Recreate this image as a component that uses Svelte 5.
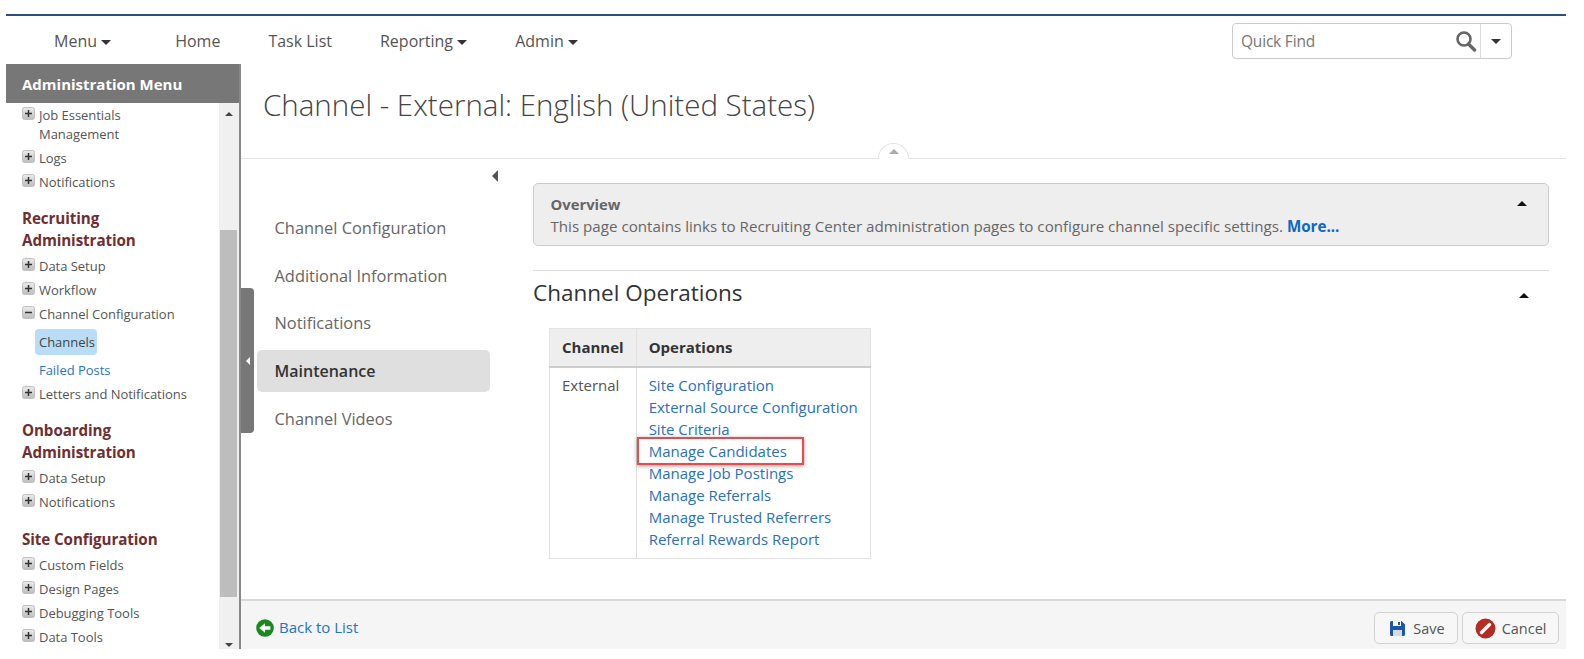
<script>
  const ops = ['Site Configuration', 'External Source Configuration', 'Site Criteria', 'Manage Candidates', 'Manage Job Postings', 'Manage Referrals', 'Manage Trusted Referrers', 'Referral Rewards Report'];
  const sideNav = ['Channel Configuration', 'Additional Information', 'Notifications', 'Maintenance', 'Channel Videos'];
</script>

{#snippet box(minus = false)}
  <svg class="box" width="13" height="13" viewBox="0 0 13 13">
    <defs><linearGradient id="g" x1="0" y1="0" x2="0" y2="1"><stop offset="0" stop-color="#ececec"/><stop offset="1" stop-color="#bcbcbc"/></linearGradient></defs>
    <rect x="0.5" y="0.5" width="12" height="12" rx="2" fill="url(#g)" stroke="#c0c0c0"/>
    <rect x="3" y="5.75" width="7" height="1.500" fill="#333"/>
    {#if !minus}<rect x="5.75" y="3" width="1.500" height="7" fill="#333"/>{/if}
  </svg>
{/snippet}

{#snippet item(label, minus = false)}
  <div class="row">{@render box(minus)}<span>{label}</span></div>
{/snippet}

{#snippet caret()}
  <i class="caret"></i>
{/snippet}

<div class="page">
  <nav class="nav">
    <a class="first">Menu {@render caret()}</a>
    <a>Home</a>
    <a>Task List</a>
    <a>Reporting {@render caret()}</a>
    <a>Admin {@render caret()}</a>
    <div class="find">
      <span class="ph">Quick Find</span>
      <svg class="glass" width="22" height="22" viewBox="0 0 22 22">
        <circle cx="9" cy="9" r="6.5" fill="none" stroke="#666" stroke-width="2.6"/>
        <path d="M13.5 14l6 6" stroke="#666" stroke-width="3.4" stroke-linecap="round"/>
      </svg>
      <span class="findbtn"><i class="caret dark"></i></span>
    </div>
  </nav>

  <div class="main">
    <aside class="side">
      <div class="sidehead">Administration Menu</div>
      <div class="sidebody">
        <div class="tree">
          <div class="row">{@render box()}<span>Job Essentials<br />Management</span></div>
          {@render item('Logs')}
          {@render item('Notifications')}
          <h3>Recruiting<br />Administration</h3>
          {@render item('Data Setup')}
          {@render item('Workflow')}
          {@render item('Channel Configuration', true)}
          <div class="pill">Channels</div>
          <div class="row sub">Failed Posts</div>
          {@render item('Letters and Notifications')}
          <h3>Onboarding<br />Administration</h3>
          {@render item('Data Setup')}
          {@render item('Notifications')}
          <h3 class="last">Site Configuration</h3>
          {@render item('Custom Fields')}
          {@render item('Design Pages')}
          {@render item('Debugging Tools')}
          {@render item('Data Tools')}
        </div>
        <div class="scroll">
          <i class="up"></i>
          <div class="thumb"></div>
          <i class="down"></i>
        </div>
      </div>
      <div class="tab"><i></i></div>
    </aside>

    <div class="content">
      <header class="head">
        <h1>Channel - External: English (United States)</h1>
        <div class="collapse"><i></i></div>
      </header>
      <div class="body">
        <div class="leftnav">
          <i class="navarrow"></i>
          {#each sideNav as n}
            <div class="navitem" class:active={n === 'Maintenance'}>{n}</div>
          {/each}
        </div>
        <section class="panel">
          <div class="overview">
            <b>Overview</b>
            <p>This page contains links to Recruiting Center administration pages to configure channel specific settings. <a>More...</a></p>
            <i class="up black"></i>
          </div>
          <div class="opshead">
            <h2>Channel Operations</h2>
            <i class="up black"></i>
          </div>
          <table>
            <thead><tr><th class="c1">Channel</th><th>Operations</th></tr></thead>
            <tbody>
              <tr>
                <td class="c1">External</td>
                <td class="links">
                  {#each ops as o}
                    <div><a class:mark={o === 'Manage Candidates'}>{o}</a></div>
                  {/each}
                </td>
              </tr>
            </tbody>
          </table>
        </section>
      </div>
      <footer class="foot">
        <svg width="18" height="18" viewBox="0 0 18 18">
          <circle cx="9" cy="9" r="8.800" fill="#1a8a1e"/>
          <path d="M3.400 9L9 4.200v3h5.400v3.600H9v3z" fill="#fff"/>
        </svg>
        <a class="back">Back to List</a>
        <button class="btn save">
          <svg width="17" height="17" viewBox="0 0 17 17">
            <path d="M1 2.500A1.500 1.500 0 012.500 1h10L16 4.500v10a1.500 1.500 0 01-1.500 1.500h-12A1.500 1.500 0 011 14.500z" fill="#1d55a8"/>
            <rect x="4" y="1" width="8" height="5" fill="#fff"/>
            <rect x="9" y="2" width="2" height="3" fill="#1d55a8"/>
            <rect x="4" y="10" width="9" height="6" fill="#cfdcec"/>
          </svg>
          Save
        </button>
        <button class="btn cancel">
          <svg width="21" height="21" viewBox="0 0 21 21">
            <circle cx="10.500" cy="10.500" r="10" fill="#b32d25"/>
            <path d="M6.500 14.500l8-8" stroke="#fff" stroke-width="3.400" stroke-linecap="round"/>
          </svg>
          Cancel
        </button>
      </footer>
    </div>
  </div>
</div>

<style>
  :global(body) { margin: 0; background: #fff; }
  .page {
    width: 1560px;
    height: 633px;
    margin: 14px 0 0 6px;
    border-top: 2px solid #2a5082;
    font-family: "Open Sans", "Noto Sans", sans-serif;
    color: #555;
    display: flex;
    flex-direction: column;
    overflow: hidden;
  }
  a { color: inherit; }
  i { display: block; }

  .nav {
    height: 48px;
    flex: none;
    box-sizing: border-box;
    padding-top: 2px;
    display: flex;
    align-items: center;
    gap: 48px;
    padding-left: 48px;
    font-size: 16px;
    color: #555;
  }
  .nav .first { margin-right: 16px; }
  .nav a { white-space: nowrap; }
  .caret {
    display: inline-block;
    width: 0; height: 0;
    border-left: 5px solid transparent;
    border-right: 5px solid transparent;
    border-top: 5px solid #333;
    vertical-align: 2px;
  }
  .find {
    margin-left: auto;
    margin-right: 54px;
    width: 278px;
    height: 34px;
    border: 1px solid #ccc;
    border-radius: 4px;
    display: flex;
    align-items: center;
  }
  .ph { flex: 1; padding-left: 8px; color: #777; font-size: 15.500px; letter-spacing: -0.2px; }
  .glass { margin-right: 3px; }
  .findbtn {
    width: 30px; height: 100%;
    border-left: 1px solid #ddd;
    display: flex; align-items: center; justify-content: center;
  }

  .main { flex: 1; display: flex; min-height: 0; }

  .side {
    width: 233px;
    flex: none;
    position: relative;
    display: flex;
    flex-direction: column;
    border-right: 2px solid #888;
  }
  .sidehead {
    height: 39px;
    flex: none;
    background: #777;
    color: #fff;
    font-weight: 700;
    font-size: 15px;
    line-height: 40px;
    padding-left: 16px;
  }
  .sidebody { flex: 1; display: flex; min-height: 0; }
  .tree { flex: 1; overflow: hidden; padding-left: 16px; font-size: 13px; color: #555; letter-spacing: -0.03px; }
  .row {
    display: flex;
    align-items: flex-start;
    gap: 4px;
    padding: 2.500px 0;
    line-height: 19px;
    white-space: nowrap;
  }
  .box { margin-top: 1px; flex: none; width: 13px; height: 13px; }
  .row.sub { padding-left: 17px; color: #1f73c9; }
  h3 {
    margin: 13px 0 3px;
    font-size: 15.200px;
    line-height: 22px;
    font-weight: 700;
    color: #6e2f31;
    letter-spacing: -0.1px;
  }
  h3.last { margin-top: 14px; }
  .pill {
    margin: 3px 0 3px 13px;
    width: 62px;
    height: 26px;
    line-height: 26px;
    background: #b9dcf7;
    border-radius: 4px;
    box-sizing: border-box;
    padding-left: 4px;
    color: #444;
  }
  .scroll {
    width: 20px;
    flex: none;
    background: #f0f0f0;
    display: flex;
    flex-direction: column;
    align-items: center;
    position: relative;
  }
  .thumb {
    position: absolute;
    top: 127px; left: 1px;
    width: 17px; height: 367px;
    background: #bdbdbd;
  }
  .up {
    width: 0; height: 0;
    border-left: 4px solid transparent;
    border-right: 4px solid transparent;
    border-bottom: 4px solid #444;
    margin-top: 9px;
  }
  .down {
    position: absolute;
    bottom: 2px;
    width: 0; height: 0;
    border-left: 4px solid transparent;
    border-right: 4px solid transparent;
    border-top: 4px solid #444;
  }
  .tab {
    position: absolute;
    left: 235px; top: 224px;
    width: 13px; height: 145px;
    background: #777;
    border-radius: 0 4px 4px 0;
    display: flex; align-items: center; justify-content: center;
  }
  .tab i {
    width: 0; height: 0;
    border-top: 4px solid transparent;
    border-bottom: 4px solid transparent;
    border-right: 4px solid #fff;
  }

  .content { flex: 1; min-width: 0; display: flex; flex-direction: column; }
  .head {
    height: 95px;
    flex: none;
    box-sizing: border-box;
    border-bottom: 1px solid #e4e4e4;
    position: relative;
    padding: 18px 0 0 22px;
  }
  h1 {
    margin: 0;
    font-weight: 300;
    font-size: 29.500px;
    line-height: 46px;
    color: #444;
    white-space: nowrap;
  }
  .collapse {
    position: absolute;
    left: 637px; bottom: -1px;
    width: 31px; height: 16px;
    box-sizing: border-box;
    border: 1px solid #e4e4e4;
    border-bottom: none;
    border-radius: 16px 16px 0 0;
    background: #fff;
    display: flex; justify-content: center;
  }
  .collapse i {
    margin-top: 5px;
    width: 0; height: 0;
    border-left: 5px solid transparent;
    border-right: 5px solid transparent;
    border-bottom: 5px solid #aaa;
  }

  .body { flex: 1; display: flex; min-height: 0; }
  .leftnav {
    width: 233px;
    flex: none;
    margin-left: 16px;
    padding-top: 45px;
    position: relative;
    font-size: 16.400px;
  }
  .navarrow {
    position: absolute;
    left: 235px; top: 11px;
    width: 0; height: 0;
    border-top: 6px solid transparent;
    border-bottom: 6px solid transparent;
    border-right: 6px solid #555;
  }
  .navitem {
    height: 47.500px;
    line-height: 47.500px;
    padding-left: 17.500px;
    color: #666;
    white-space: nowrap;
  }
  .navitem.active {
    background: #dfdfdf;
    border-radius: 5px;
    color: #333;
    font-weight: 600;
    font-size: 16px;
    height: 42px;
    line-height: 42px;
    margin: 3px 0 3px;
  }
  .panel { flex: none; width: 1016px; margin-left: 43px; }
  .overview {
    margin-top: 24px;
    height: 63px;
    box-sizing: border-box;
    border: 1px solid #ccc;
    border-radius: 5px;
    background: #eee;
    padding: 9px 16px 0 16.500px;
    font-size: 15.150px;
    line-height: 22px;
    position: relative;
    color: #666;
  }
  .overview b { display: block; color: #666; font-size: 14.800px; }
  .overview p { margin: 0; white-space: nowrap; }
  .overview a { color: #0d66c8; font-weight: 700; }
  .overview .up { position: absolute; right: 21px; top: 8px; border-left-width: 5px; border-right-width: 5px; border-bottom-color: #111; border-bottom-width: 5px; }
  .opshead {
    margin-top: 24px;
    border-top: 1px solid #ddd;
    height: 46px;
    box-sizing: border-box;
    padding-bottom: 3px;
    display: flex;
    align-items: center;
    position: relative;
  }
  h2 { margin: 0; font-weight: 400; font-size: 22.500px; color: #333; }
  .opshead .up { position: absolute; right: 20px; top: 22px; margin: 0; border-left-width: 5px; border-right-width: 5px; border-bottom-color: #111; border-bottom-width: 5px; }
  table {
    margin: 12px 0 0 16px;
    border-collapse: collapse;
    font-size: 15px;
  }
  th, td { border: 1px solid #e2e2e2; text-align: left; padding: 0 12px; }
  th { background: #eee; height: 36px; color: #333; font-weight: 700; border-bottom: 2px solid #ccc; padding-bottom: 1px; }
  .c1 { width: 60px; padding-right: 12px; }
  td { vertical-align: top; padding-top: 5.500px; padding-bottom: 8.500px; color: #555; line-height: 22px; }
  .links { width: 208px; color: #2a6fc0; white-space: nowrap; }
  .mark {
    display: inline-block;
    position: relative;
    line-height: 22px;
  }
  .mark::after {
    content: "";
    position: absolute;
    left: -12px; right: -17px; top: -3px; bottom: -3px;
    border: 2px solid #e84a4d;
    box-shadow: 0 1px 4px rgba(0,0,0,.4);
  }

  .foot {
    height: 50px;
    flex: none;
    box-sizing: border-box;
    border-top: 2px solid #d8d8d8;
    background: #f5f5f5;
    display: flex;
    align-items: center;
    padding: 6px 7px 0 15px;
    font-size: 15px;
  }
  .back { color: #1f73c9; margin: 0 0 2px 5px; }
  .btn {
    height: 32px;
    box-sizing: border-box;
    border: 1px solid #d2d2d2;
    border-radius: 5px;
    background: #f7f7f7;
    font: inherit;
    font-size: 14.500px;
    color: #555;
    display: flex;
    align-items: center;
    gap: 6px;
  }
  .save { margin-left: auto; padding: 0 12px 0 14px; gap: 7px; }
  .cancel { margin-left: 4px; padding: 0 11.500px 0 12px; }
</style>
